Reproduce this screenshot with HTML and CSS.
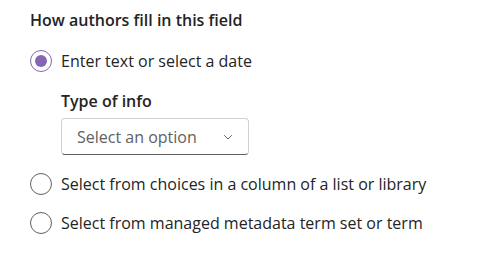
FILE: index.html
```html
<!DOCTYPE html>
<html>
<head>
<meta charset="utf-8">
<link rel="stylesheet" href="styles.css">
</head>
<body>
<div class="panel">
  <div class="heading">How authors fill in this field</div>
  <div class="group">
    <div class="option">
      <span class="radio checked"><span class="dot"></span></span>
      <span class="label">Enter text or select a date</span>
    </div>
    <div class="nested">
      <div class="sublabel">Type of info</div>
      <div class="dropdown">
        <span class="placeholder">Select an option</span>
        <svg class="chev" width="12" height="12" viewBox="0 0 12 12"><path d="M2.5 4.5 L6 8 L9.5 4.5" fill="none" stroke="#616161" stroke-width="1" stroke-linecap="round" stroke-linejoin="round"/></svg>
      </div>
    </div>
    <div class="option opt2">
      <span class="radio"></span>
      <span class="label">Select from choices in a column of a list or library</span>
    </div>
    <div class="option opt3">
      <span class="radio"></span>
      <span class="label">Select from managed metadata term set or term</span>
    </div>
  </div>
</div>
</body>
</html>
```
FILE: styles.css
```css
html, body {
  margin: 0;
  padding: 0;
  background: #ffffff;
}
body {
  font-family: "Open Sans", "Noto Sans", sans-serif;
  color: #242424;
  width: 503px;
  height: 280px;
  overflow: hidden;
}
.panel {
  padding: 10px 0 0 30px;
  display: flex;
  flex-direction: column;
}
.heading {
  font-size: 16px;
  font-weight: 600;
  line-height: 20px;
  height: 20px;
}
.group {
  display: flex;
  flex-direction: column;
  margin-top: 20px;
}
.option {
  display: flex;
  align-items: center;
  height: 22px;
  gap: 9px;
}
.radio {
  box-sizing: border-box;
  width: 22px;
  height: 22px;
  border: 1.5px solid #616161;
  border-radius: 50%;
  display: flex;
  align-items: center;
  justify-content: center;
  flex: none;
}
.radio.checked {
  border-color: #8764b8;
}
.dot {
  width: 12px;
  height: 12px;
  border-radius: 50%;
  background: #8764b8;
}
.label {
  font-size: 16px;
  line-height: 22px;
}
.nested {
  margin-left: 31px;
  margin-top: 19px;
  display: flex;
  flex-direction: column;
}
.sublabel {
  font-size: 16px;
  font-weight: 600;
  line-height: 20px;
}
.dropdown {
  box-sizing: border-box;
  margin-top: 7px;
  width: 188px;
  height: 37px;
  border: 1px solid #d1d1d1;
  border-bottom-color: #616161;
  border-radius: 4px;
  display: flex;
  align-items: center;
  justify-content: space-between;
  padding: 0 14px 0 15px;
}
.placeholder {
  font-size: 16px;
  color: #616161;
}
.chev {
  display: block;
}
.opt2 {
  margin-top: 18px;
}
.opt3 {
  margin-top: 17px;
}
```
